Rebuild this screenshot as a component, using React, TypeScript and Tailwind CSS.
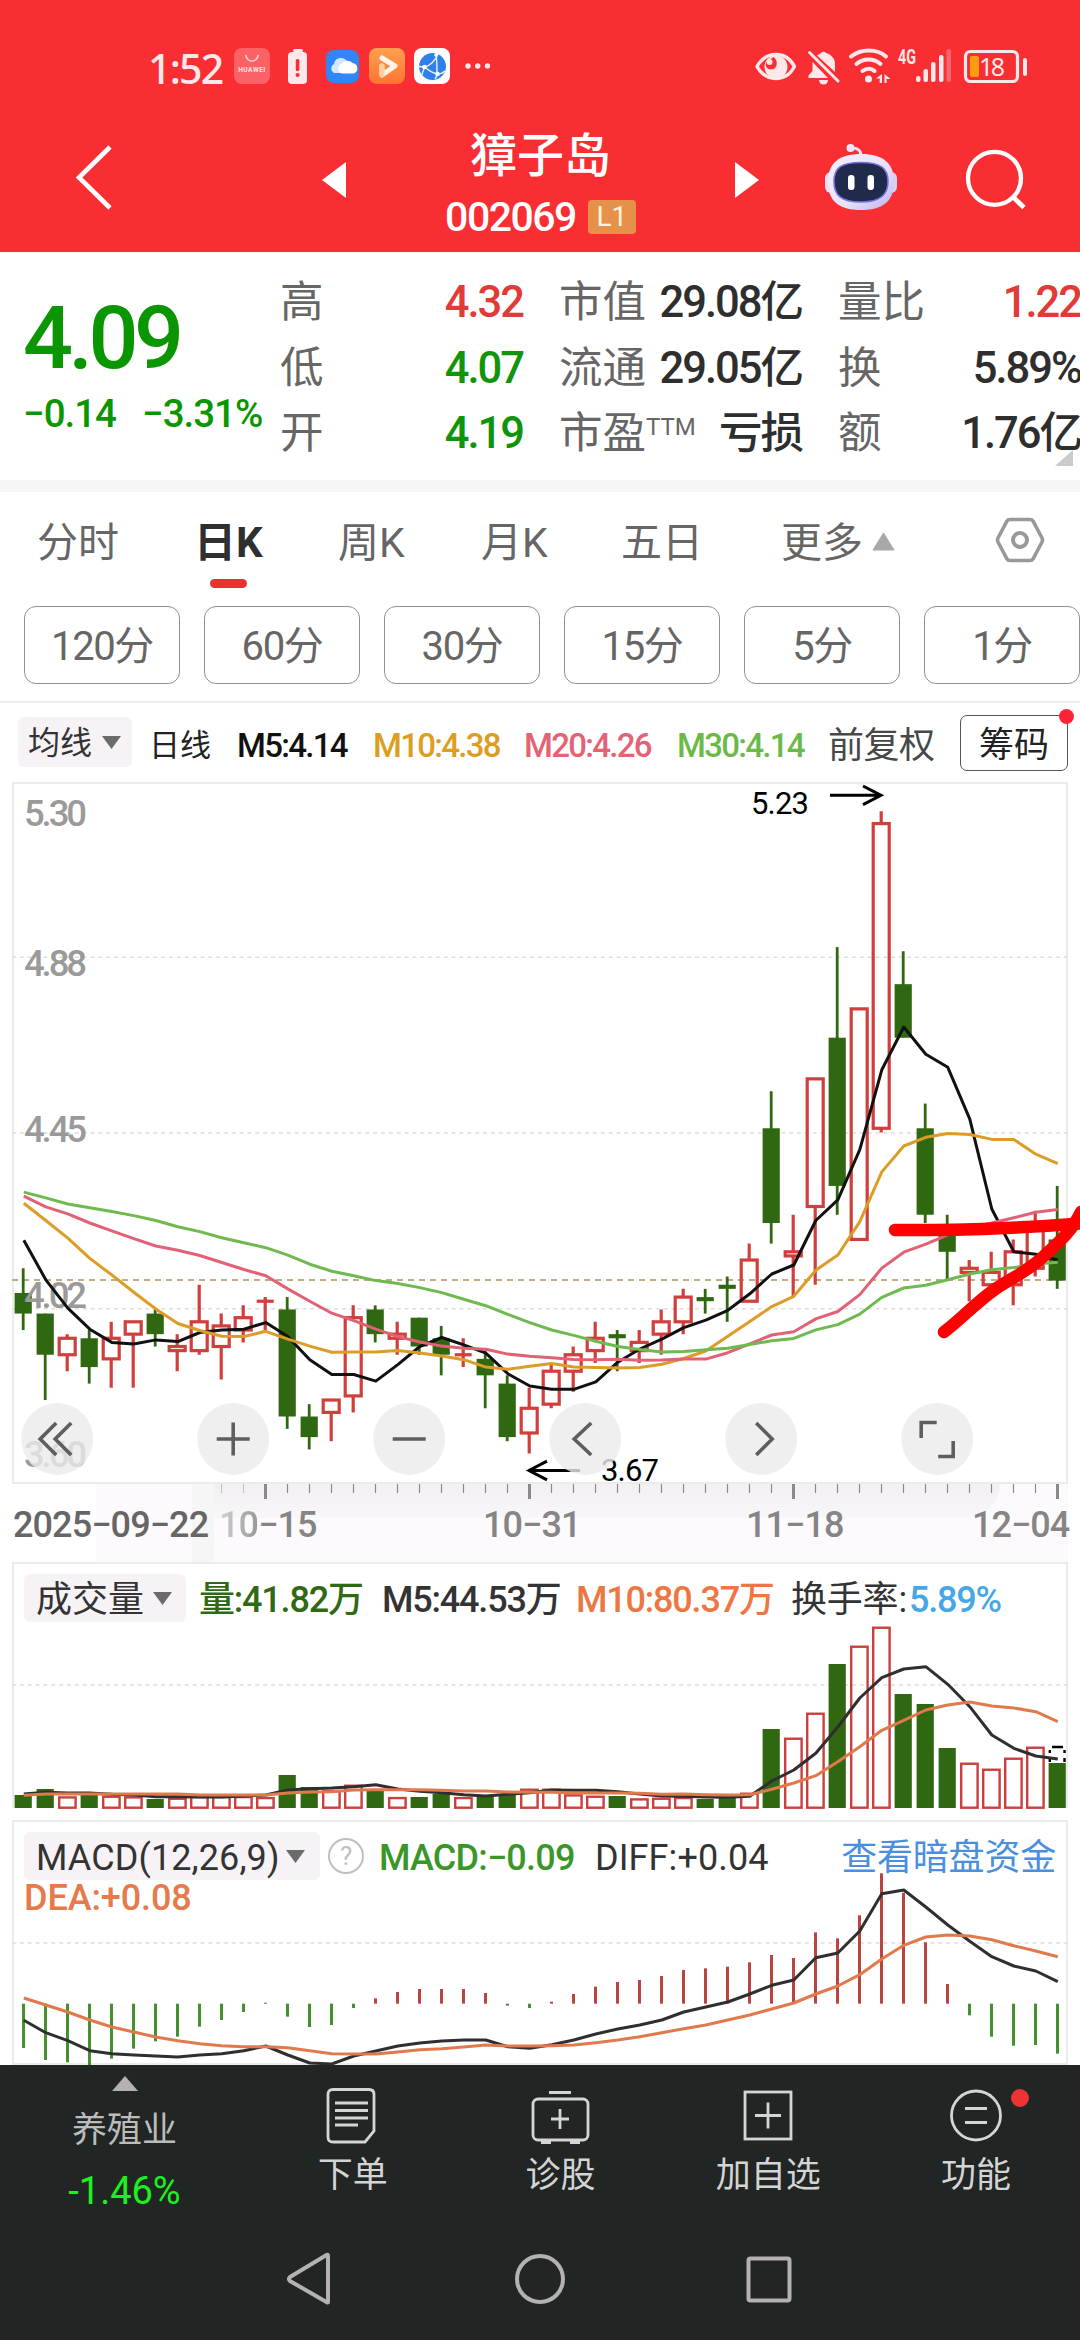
import React from 'react';

// [up, high, bodyTop, bodyBottom, low]
type Candle = [number, number, number, number, number];

const CANDLES: Candle[] = [
  [0, 4.12, 4.06, 4.01, 3.97], [0, 4.01, 4.01, 3.91, 3.8], [1, 3.96, 3.95, 3.91, 3.87], [0, 3.97, 3.95, 3.88, 3.84],
  [1, 3.99, 3.95, 3.9, 3.83], [1, 3.99, 3.99, 3.96, 3.83], [0, 4.02, 4.01, 3.96, 3.93], [1, 3.96, 3.93, 3.92, 3.87],
  [1, 4.08, 3.99, 3.92, 3.91], [1, 4.01, 3.98, 3.93, 3.85], [1, 4.03, 4.0, 3.97, 3.94], [1, 4.05, 4.04, 4.04, 3.97],
  [0, 4.05, 4.02, 3.76, 3.73], [0, 3.79, 3.76, 3.71, 3.68], [1, 3.8, 3.8, 3.77, 3.7], [1, 4.03, 4.0, 3.81, 3.77],
  [0, 4.03, 4.02, 3.96, 3.94], [1, 3.99, 3.96, 3.95, 3.91], [0, 4.0, 4.0, 3.93, 3.91], [0, 3.98, 3.95, 3.91, 3.86],
  [1, 3.95, 3.91, 3.91, 3.88], [0, 3.92, 3.9, 3.86, 3.78], [0, 3.86, 3.84, 3.71, 3.7], [1, 3.83, 3.78, 3.72, 3.67],
  [1, 3.89, 3.87, 3.79, 3.78], [1, 3.93, 3.91, 3.87, 3.82], [1, 3.99, 3.95, 3.92, 3.89], [0, 3.97, 3.96, 3.95, 3.87],
  [1, 3.97, 3.94, 3.92, 3.89], [1, 4.02, 3.99, 3.96, 3.91], [1, 4.07, 4.05, 3.99, 3.96], [0, 4.07, 4.05, 4.04, 4.01],
  [0, 4.1, 4.08, 4.07, 3.99], [1, 4.18, 4.14, 4.04, 4.04], [0, 4.55, 4.46, 4.23, 4.18], [1, 4.25, 4.16, 4.15, 4.05],
  [1, 4.58, 4.58, 4.27, 4.08], [0, 4.9, 4.68, 4.32, 4.25], [1, 4.75, 4.75, 4.19, 4.19], [1, 5.23, 5.2, 4.46, 4.45],
  [0, 4.89, 4.81, 4.68, 4.68], [0, 4.52, 4.46, 4.25, 4.23], [0, 4.25, 4.21, 4.16, 4.09], [1, 4.14, 4.12, 4.11, 4.04],
  [1, 4.16, 4.11, 4.08, 4.07], [1, 4.19, 4.16, 4.08, 4.03], [1, 4.26, 4.22, 4.12, 4.1], [0, 4.32, 4.19, 4.09, 4.07],
];

// averages of the days whose window starts before the first candle
const MA5_HEAD = [4.188, 4.092, 4.023, 3.972];
const MA10_HEAD = [4.278, 4.236, 4.193, 4.144, 4.104, 4.062, 4.021, 3.986, 3.969];
const MA20_HEAD = [
  4.295, 4.269, 4.252, 4.23, 4.211, 4.192, 4.174, 4.164, 4.151, 4.134, 4.117, 4.102, 4.07, 4.04, 4.011, 3.993, 3.972,
  3.954, 3.941,
];
const MA30_HEAD = [
  4.305, 4.291, 4.276, 4.267, 4.258, 4.248, 4.236, 4.221, 4.209, 4.194, 4.182, 4.17, 4.152, 4.13, 4.113, 4.102, 4.09,
  4.083, 4.073, 4.061, 4.045, 4.029, 4.008, 3.988, 3.97, 3.957, 3.943, 3.93, 3.923,
];

// indicator series, in thirds of a pixel below the top of the volume block
const VOLUME = [
  735, 717, 741, 735, 739, 741, 747, 745, 740, 740, 740, 743, 675, 711, 722, 706, 722, 743, 741, 732, 743, 738, 735, 718,
  718, 735, 739, 738, 747, 745, 743, 747, 741, 730, 537, 565, 490, 342, 289, 232, 432, 462, 594, 640, 658, 625, 592, 639,
];
const VOL_MA5 = [
  732, 727, 729, 729, 733, 735, 740, 740, 741, 741, 738, 735, 720, 716, 714, 710, 704, 717, 724, 728, 734, 738, 733, 728,
  720, 721, 721, 725, 732, 738, 739, 741, 742, 739, 693, 660, 610, 531, 444, 383, 357, 350, 403, 470, 555, 595, 618, 627,
];
const VOL_MA10 = [
  736, 732, 732, 732, 732, 732, 732, 732, 735, 735, 735, 735, 729, 726, 725, 720, 719, 719, 719, 721, 723, 723, 726, 727,
  727, 729, 729, 729, 730, 733, 732, 734, 735, 734, 718, 699, 677, 635, 590, 541, 511, 480, 465, 456, 468, 474, 485, 515,
];
const MACD = [
  1494, 1530, 1537, 1548, 1526, 1496, 1474, 1460, 1430, 1410, 1386, 1358, 1400, 1431, 1425, 1374, 1345, 1326, 1317, 1317,
  1317, 1329, 1367, 1374, 1355, 1332, 1310, 1296, 1290, 1278, 1260, 1255, 1250, 1237, 1215, 1224, 1147, 1165, 1096, 970,
  1028, 1177, 1302, 1396, 1460, 1487, 1485, 1511,
];
const DIFF = [
  1411, 1448, 1472, 1502, 1511, 1515, 1518, 1521, 1515, 1511, 1502, 1488, 1515, 1539, 1542, 1518, 1503, 1488, 1479, 1473,
  1470, 1470, 1490, 1495, 1484, 1470, 1452, 1437, 1425, 1410, 1386, 1371, 1356, 1332, 1306, 1290, 1223, 1209, 1143, 1031,
  1020, 1071, 1125, 1174, 1220, 1248, 1263, 1295,
];
const DEA = [
  1344, 1365, 1386, 1410, 1431, 1446, 1461, 1472, 1481, 1487, 1490, 1490, 1493, 1502, 1511, 1512, 1512, 1506, 1499, 1496,
  1491, 1485, 1488, 1488, 1487, 1485, 1478, 1470, 1460, 1448, 1436, 1425, 1410, 1395, 1377, 1359, 1332, 1308, 1274, 1227,
  1186, 1161, 1155, 1158, 1169, 1187, 1203, 1220,
];

const RED = '#d23e3c';
const GREEN = '#306812';

const px = (i: number) => 23.2 + i * 22;
const priceY = (p: number) => 782.4 + (5.3 - p) * 411.76;
const subY = (v: number) => 1550 + v / 3;

const closes = CANDLES.map(([up, , top, bottom]) => (up ? top : bottom));

const movingAverage = (n: number, head: number[]) =>
  closes.map((_, i) => (i < n - 1 ? head[i] : closes.slice(i - n + 1, i + 1).reduce((a, b) => a + b, 0) / n));

const toPoints = (values: number[], y: (v: number) => number) =>
  values.map((v, i) => `${px(i) + 0.6},${y(v).toFixed(1)}`).join(' ');

const Line: React.FC<{ values: number[]; y: (v: number) => number; color: string }> = ({ values, y, color }) => (
  <polyline points={toPoints(values, y)} fill="none" stroke={color} strokeWidth="3" strokeLinejoin="round" />
);

const GridLine: React.FC<{ y: number }> = ({ y }) => (
  <line x1="12" x2="1068" y1={y} y2={y} stroke="#dedede" strokeWidth="1.4" strokeDasharray="4 3.85" />
);

const Caret: React.FC<{ className?: string }> = ({ className = '' }) => (
  <svg className={`shrink-0 ${className}`} width="19" height="13" viewBox="0 0 19 13">
    <path d="M0 0h19L9.5 13z" fill="#6b6b6b" />
  </svg>
);

const StatusBar = () => (
  <div className="flex h-[132px] items-center pl-[148px] pr-[51px] text-[#ffe8ea]">
    <span className="w-[86px] pt-[4px] text-[41px] leading-none font-medium tracking-[-1.8px] font-['Noto_Sans',sans-serif]">1:52</span>
    <svg width="262" height="40" viewBox="234 46 262 40" className="shrink-0">
      <defs>
        <linearGradient id="play" x1="0" y1="0" x2="0" y2="1">
          <stop offset="0" stopColor="#ffa04e" />
          <stop offset="1" stopColor="#ff7430" />
        </linearGradient>
      </defs>
      <rect x="234" y="48" width="36" height="36" rx="8" fill="#fb6266" />
      <path d="M246 55a6 6 0 0 0 12 0" fill="none" stroke="#ffd0d2" strokeWidth="1.6" />
      <text x="252" y="71.5" fontSize="6.6" fontWeight="700" textAnchor="middle" fill="#ffe2e3" fontFamily="Roboto" letterSpacing=".5">HUAWEI</text>
      <rect x="293" y="49" width="10" height="3" rx="1.5" fill="#ffe8ea" />
      <rect x="288" y="52" width="19" height="32" rx="4" fill="#ffe8ea" />
      <rect x="295.8" y="59" width="3.6" height="12" rx="1.5" fill="#f92e33" />
      <circle cx="297.6" cy="75" r="2.1" fill="#f92e33" />
      <rect x="326" y="50" width="33" height="33" rx="8" fill="#2f86f6" />
      <path d="M334 73a5 5 0 0 1 0-9 7 7 0 0 1 6.500-6 8 8 0 0 1 7.500 5l-6 10z" fill="#d3e7ff" />
      <path d="M342 73.500a5 5 0 0 1-.5-9.500 7 7 0 0 1 11-1 5.500 5.500 0 0 1 1.500 10.500z" fill="#fff" />
      <rect x="369" y="48" width="36" height="36" rx="8" fill="url(#play)" />
      <path d="M382 58l13 8-13 9v-9" fill="none" stroke="#fff4ea" strokeWidth="5" strokeLinejoin="round" strokeLinecap="round" />
      <path d="M382 75v-9" stroke="#ffcf9f" strokeWidth="5" strokeLinecap="round" />
      <rect x="414" y="48" width="36" height="36" rx="8" fill="#fff" />
      <circle cx="432.5" cy="66.5" r="13.5" fill="#2f80ea" />
      <path d="M436 53c1 8 1 14 1 21m-12-7c6-2 10-6 13-13m-13 13c5 5 8 6 12 7m-12-7c-2 4-3 6-3 8m15-1c4 0 6-1 8-3m-8 3c0 2-1 4-2 5m-12-12c-3 0-5-1-6-2" fill="none" stroke="#e8f2ff" strokeWidth="1.4" />
      <circle cx="424.5" cy="67" r="2.3" fill="#fff" />
      <circle cx="437.500" cy="74" r="2.3" fill="#fff" />
      <circle cx="436" cy="55" r="1.8" fill="#fff" />
      <circle cx="468" cy="66" r="2.7" fill="#ffe8ea" />
      <circle cx="477.7" cy="66" r="2.7" fill="#ffe8ea" />
      <circle cx="487.5" cy="66" r="2.7" fill="#ffe8ea" />
    </svg>
    <svg width="276" height="40" viewBox="754 46 276 40" className="ml-auto shrink-0">
      <g fill="none" stroke="#ffe8ea" strokeWidth="3.4" strokeLinecap="round" strokeLinejoin="round">
        <path d="M758 66.500c9-16 29-16 37.500 0-8.500 16-28.500 16-37.500 0z" />
        <path d="M852 56.500c10-8 26-8 35 0" strokeWidth="4" />
        <path d="M857.500 64c7-6 17-6 24 0" strokeWidth="4" />
        <path d="M863.500 71c4-3 9-3 12 0" strokeWidth="4" />
        <path d="M810.500 52.500 839 81" strokeWidth="3" />
      </g>
      <circle cx="777" cy="67" r="11.5" fill="#ffe8ea" />
      <path d="M774.500 57c4 3 4.500 9 .5 12l-3 .500c-4 0-6-3-5-7z" fill="#f92e33" />
      <circle cx="770.500" cy="62" r="3" fill="#ffe8ea" />
      <path d="M813.500 62 829 78h-19.500v-2.500l4-4.500zM818 55.500l4-2.500a3 3 0 0 1 5 0c6 2 9 6 9 11v8z" fill="#ffe8ea" />
      <path d="M820 80h9a4.500 4.500 0 0 1-9 0z" fill="#ffe8ea" />
      <circle cx="869.5" cy="79" r="3.5" fill="#ffe8ea" />
      <path d="M883 74v9h-2.300v-4.500h-3.700zM885.500 74v9h2v-4h4z" fill="#ffe8ea" />
      <text x="899" y="64" fontSize="20" fontWeight="700" textLength="18" lengthAdjust="spacingAndGlyphs" fill="#ffe8ea" fontFamily="Roboto">4G</text>
      <g fill="#ffe8ea">
        <rect x="917" y="76" width="4.5" height="6" rx="2" />
        <rect x="924.5" y="69" width="4.5" height="13" rx="2" />
        <rect x="932" y="62" width="4.5" height="20" rx="2" />
        <rect x="940" y="55" width="4.5" height="27" rx="2" />
        <rect x="947.5" y="49" width="4.5" height="33" rx="2" opacity=".3" />
        <rect x="1024" y="58" width="4" height="18" rx="2" />
      </g>
      <rect x="966.5" y="51.5" width="52" height="30" rx="5" fill="none" stroke="#ffe8ea" strokeWidth="3.2" />
      <rect x="971" y="56" width="9" height="21" rx="2" fill="#ff9d12" />
      <text x="980" y="76" fontSize="25" fill="#ffe8ea" fontFamily="Noto Sans" textLength="26">18</text>
    </svg>
  </div>
);

const TitleBar = () => (
  <div className="flex h-[120px] text-white">
    <svg width="322" height="120" viewBox="0 132 322 120" className="shrink-0">
      <path d="M110 147 79 177.500l31 30.500" fill="none" stroke="#fff" strokeWidth="4.6" />
    </svg>
    <svg width="24" height="36" viewBox="0 0 24 36" className="mt-[30px] shrink-0">
      <path d="M24 0v36L0 18z" fill="#fff" />
    </svg>
    <div className="flex w-[389px] shrink-0 flex-col items-center">
      <h1 className="text-[47px] leading-[48px] font-medium">獐子岛</h1>
      <div className="mt-[17px] flex items-center gap-[12px]">
        <span className="text-[41px] leading-[40px] font-medium tracking-[-1.5px]">002069</span>
        <span className="flex h-[34px] w-[48px] items-center justify-center rounded-[4px] bg-[#e6914a] text-[28px] text-[#fff2dd]">L1</span>
      </div>
    </div>
    <svg width="24" height="36" viewBox="0 0 24 36" className="mt-[30px] shrink-0">
      <path d="M0 0v36l24-18z" fill="#fff" />
    </svg>
    <svg width="321" height="120" viewBox="759 132 321 120" className="shrink-0">
      <defs>
        <linearGradient id="head" x1="0" y1="0" x2="1" y2="1">
          <stop offset="0" stopColor="#f6f2ff" />
          <stop offset=".6" stopColor="#e6e0fa" />
          <stop offset="1" stopColor="#b9b2ee" />
        </linearGradient>
      </defs>
      <rect x="825" y="172" width="12" height="21" rx="6" fill="#e4def8" />
      <rect x="885" y="172" width="12" height="21" rx="6" fill="#d8d0f5" />
      <path d="M851 148c7 0 10 2 10 8" fill="none" stroke="#e9defa" strokeWidth="3" />
      <circle cx="850.5" cy="148" r="4" fill="#eee6fc" />
      <path d="M861 154c22 0 33 9 33 28 0 20-12 28-33 28s-33-8-33-28c0-19 11-28 33-28z" fill="url(#head)" />
      <path d="M861 162.500c20 0 27 6 27 19s-7 20.500-27 20.500-27-7-27-20.500 7-19 27-19z" fill="#1f2a4c" stroke="#7a6fe0" strokeWidth="1.6" />
      <rect x="848" y="175" width="6.5" height="15" rx="3" fill="#fff" />
      <rect x="867.5" y="175" width="6.5" height="15" rx="3" fill="#fff" />
      <circle cx="994.5" cy="178.3" r="26.5" fill="none" stroke="#fff" strokeWidth="4.3" />
      <path d="M1013 197l11 10.500" stroke="#fff" strokeWidth="4.8" />
    </svg>
  </div>
);

const Quote: React.FC<{ label: React.ReactNode; value: React.ReactNode; color?: string }> = ({
  label,
  value,
  color = 'text-[#2e2e2e]',
}) => (
  <div className="flex h-[65.500px] items-center justify-between whitespace-nowrap">
    <span className="text-[43.500px] text-[#666]">{label}</span>
    <span className={`-mr-[1px] text-[43.500px] font-medium tracking-[-2px] ${color}`}>{value}</span>
  </div>
);

const QuotePanel = () => (
  <div className="relative flex h-[228px] bg-white">
    <div className="w-[280px] shrink-0 pl-[23px] pt-[41px] text-[#0a9600]">
      <div className="text-[88px] leading-[90px] font-medium tracking-[-4.5px]">4.09</div>
      <div className="mt-[9px] flex gap-[26px] text-[38.5px] leading-[44px] font-medium tracking-[-1px] whitespace-nowrap">
        <span>−0.14</span>
        <span>−3.31%</span>
      </div>
    </div>
    <div className="w-[242px] shrink-0 pt-[18px]">
      <Quote label="高" value="4.32" color="text-[#e23a37]" />
      <Quote label="低" value="4.07" color="text-[#0f940c]" />
      <Quote label="开" value="4.19" color="text-[#0f940c]" />
    </div>
    <div className="ml-[37px] w-[242px] shrink-0 pt-[18px]">
      <Quote label="市值" value="29.08亿" />
      <Quote label="流通" value="29.05亿" />
      <Quote label={<>市盈<sup className="-top-[13px] text-[24px]">TTM</sup></>} value="亏损" />
    </div>
    <div className="ml-[37px] w-[242px] shrink-0 pt-[18px]">
      <Quote label="量比" value="1.22" color="text-[#e23a37]" />
      <Quote label="换" value="5.89%" />
      <Quote label="额" value="1.76亿" />
    </div>
    <svg className="absolute right-[7px] bottom-[14px]" width="18" height="16" viewBox="0 0 18 16">
      <path d="M18 0v16H0z" fill="#cbcbcb" />
    </svg>
  </div>
);

const PERIODS = ['120分', '60分', '30分', '15分', '5分', '1分'];

const PeriodTabs = () => (
  <>
    <div className="flex h-[114px] items-start pt-[21px] pl-[37px] text-[41px] leading-[60px] text-[#666] whitespace-nowrap">
      <span className="w-[157px]">分时</span>
      <div className="w-[144px] text-[42px] font-bold text-[#2f2f2f]">
        日K
        <div className="mt-[6px] ml-[16px] h-[9px] w-[37px] rounded-full bg-[#e93131]" />
      </div>
      <span className="w-[143px]">周K</span>
      <span className="w-[140px]">月K</span>
      <span className="w-[160px]">五日</span>
      <div className="flex w-[214px] items-center">
        更多
        <svg className="-mt-[4px] ml-[9px]" width="23" height="19" viewBox="0 0 23 19">
          <path d="M11.500 1 22 18H1z" fill="#a9a7a9" stroke="#a9a7a9" strokeLinejoin="round" />
        </svg>
      </div>
      <svg className="mt-[4px]" width="50" height="46" viewBox="0 0 50 46" fill="none" stroke="#999" strokeWidth="4">
        <path d="M15 2.500h20q2 0 3 1.500l9 17q1 2 0 4l-9 17q-1 1.500-3 1.500H15q-2 0-3-1.500L3 25q-1-2 0-4l9-17q1-1.500 3-1.500z" strokeWidth="3.6" />
        <circle cx="25" cy="23" r="7" />
      </svg>
    </div>
    <div className="flex h-[97px] gap-[24px] border-b-2 border-[#ececec] pl-[24px]">
      {PERIODS.map((p) => (
        <div
          key={p}
          className="flex h-[78px] w-[156px] shrink-0 items-center justify-center rounded-[12px] border border-[#8f8f8f] pt-[4px] text-[40px] tracking-[-1.4px] text-[#666]"
        >
          {p}
        </div>
      ))}
    </div>
  </>
);

const LegendBar = () => (
  <div className="flex h-[79px] items-start pt-[14px] pl-[18px] text-[33px] leading-[50px] font-medium tracking-[-1.7px] whitespace-nowrap">
    <div className="flex h-[50px] w-[114px] items-center rounded-[6px] bg-[#f6f2f6] pt-[2px] pl-[10px] font-normal text-[#333] tracking-normal">
      <span className="text-[32px]">均线</span>
      <Caret className="-mt-[2px] ml-[10px]" />
    </div>
    <span className="ml-[17px] w-[88px] pt-[4px] text-[31px] font-normal text-[#222] tracking-normal">日线</span>
    <span className="w-[136px] pt-[4px] text-[#111]">M5:4.14</span>
    <span className="w-[151px] pt-[4px] text-[#dd9d20]">M10:4.38</span>
    <span className="w-[153px] pt-[4px] text-[#e36374]">M20:4.26</span>
    <span className="w-[151px] pt-[4px] text-[#6bba49]">M30:4.14</span>
    <span className="w-[132px] pt-[4px] text-[36px] font-normal text-[#484848] tracking-[-.5px]">前复权</span>
    <div className="relative -mt-[2px] flex h-[56px] w-[108px] items-center justify-center rounded-[7px] border border-[#555] pt-[5px] text-[35px] font-normal text-[#222] tracking-normal">
      筹码
      <span className="absolute -top-[7px] -right-[7px] size-[15px] rounded-full bg-[#ff2335]" />
    </div>
  </div>
);

const TOOLS = [
  'M-1-16-17 0-1 16M14-16-2 0 14 16',
  'M-16.500 0h33M0-16.500v33',
  'M-16.500 0h33',
  'M6-16-11 0 6 16',
  'M-5-16 11 0-5 16',
  'M-16-1v-15.500h15.500M16 2v15.500H1',
];

const PriceChart = () => (
  <svg width="1080" height="702" viewBox="0 782 1080 702" className="block">
    <rect x="13" y="783" width="1054" height="700" fill="none" stroke="#ebebeb" strokeWidth="2" />
    <GridLine y={957.3} />
    <GridLine y={1133} />
    <GridLine y={1308.7} />
    <line x1="12" x2="1068" y1="1280" y2="1280" stroke="#bcae80" strokeWidth="1.8" strokeDasharray="6 5" />
    {CANDLES.map(([up, high, top, bottom, low], i) => {
      const x = px(i);
      const t = priceY(top);
      const b = priceY(bottom);
      return up ? (
        <g key={i} stroke={RED} strokeWidth="3.2" fill="none">
          <path d={`M${x} ${priceY(high)}V${t}M${x} ${b}V${priceY(low)}`} />
          {b - t < 1 ? <path d={`M${x - 8.5} ${t}h17`} /> : <rect x={x - 8} y={t} width="16" height={b - t} />}
        </g>
      ) : (
        <g key={i} fill={GREEN}>
          <rect x={x - 1.4} y={priceY(high)} width="2.8" height={priceY(low) - priceY(high)} />
          <rect x={x - 8.6} y={t} width="17.2" height={b - t} />
        </g>
      );
    })}
    <g fill="#9a9a9a" fontSize="36.5" fontWeight="500" fontFamily="Roboto">
      <text x="24" y="826" textLength="63">5.30</text>
      <text x="24" y="975.5" textLength="63">4.88</text>
      <text x="24" y="1141.5" textLength="63">4.45</text>
      <text x="24" y="1308" textLength="63">4.02</text>
      <text x="24" y="1466.5" textLength="63">3.60</text>
    </g>
    <Line values={movingAverage(5, MA5_HEAD)} y={priceY} color="#111" />
    <Line values={movingAverage(10, MA10_HEAD)} y={priceY} color="#dc9c26" />
    <Line values={movingAverage(20, MA20_HEAD)} y={priceY} color="#e26175" />
    <Line values={movingAverage(30, MA30_HEAD)} y={priceY} color="#6fb94f" />
    <g fontSize="31" fontFamily="Roboto" fill="#000">
      <text x="751" y="814" textLength="58">5.23</text>
      <text x="601" y="1480.5" textLength="58">3.67</text>
    </g>
    <path d="M830 795.300h51M863 786l18 9.300-18 9.300M580 1470.500h-51m18-9.300-18 9.300 18 9.300" fill="none" stroke="#000" strokeWidth="3" />
    {TOOLS.map((d, i) => (
      <g key={i} transform={`translate(${57.2 + i * 176} 1439)`}>
        <circle r="36" fill="#ebebeb" fillOpacity=".8" />
        <path d={d} fill="none" stroke="#5e5e5e" strokeWidth="3.6" />
      </g>
    ))}
    {/* hand-drawn trend marks */}
    <g fill="none" stroke="#ff0000" strokeLinecap="round" strokeWidth="12.5">
      <path d="M895 1230c60 0 110-.5 191-7" />
      <path d="M944 1332c16-12 34-31 50-42s34-19 50-34c14-13 28-25 37-44" />
    </g>
  </svg>
);

const DateAxis = () => (
  <div className="relative flex h-[78px] items-start bg-white pt-[21px] pl-[13px] text-[36px] leading-[40px] font-medium text-[#858585] whitespace-nowrap">
    <div className="absolute top-0 right-[12px] bottom-0 left-[96px] bg-[#fdfafd]" />
    <div className="absolute top-0 right-[80px] left-[192px] h-[34px] rounded-br-[120px] bg-linear-to-b from-[#f3f0f3] to-[#f8f6f8]" />
    <div className="absolute top-0 left-[192px] h-[78px] w-[22px] bg-[#f7f6f7]" />
    <svg className="absolute top-0 left-0" width="1080" height="16" viewBox="0 1484 1080 16">
      {CANDLES.map((_, i) =>
        i < 9 ? null : (
          <line
            key={i}
            x1={px(i) + 0.3}
            x2={px(i) + 0.3}
            y1="1484"
            y2={i % 12 === 11 ? 1499 : 1493}
            stroke={i < 11 ? '#c4c4c4' : '#8a8a8a'}
            strokeWidth={i % 12 === 11 ? 3 : 1.2}
          />
        ),
      )}
    </svg>
    <span className="relative w-[206px] tracking-[-.9px] text-[#666]">2025−09−22</span>
    <span className="relative w-[264px] tracking-[-.9px]">
      <span className="bg-linear-to-r from-[#d2d2d2] to-[#999] bg-clip-text text-transparent">10</span>−15
    </span>
    <span className="relative w-[263px] tracking-[-.9px]">10−31</span>
    <span className="relative w-[226px] tracking-[-.9px]">11−18</span>
    <span className="relative tracking-[-1px]">12−04</span>
  </div>
);

const VolumePanel = () => (
  <div className="relative h-[258px]">
    <svg width="1080" height="258" viewBox="0 1562 1080 258" className="block">
      <path d="M13 1808V1563h1054v245" fill="none" stroke="#ebebeb" strokeWidth="2" />
      <GridLine y={1685} />
      {VOLUME.map((v, i) =>
        CANDLES[i][0] ? (
          <rect key={i} x={px(i) - 8} y={subY(v) + 0.4} width="16.4" height={1807.3 - subY(v)} fill="none" stroke="#c9403e" strokeWidth="2.4" />
        ) : (
          <rect key={i} x={px(i) - 8.6} y={subY(v)} width="17.2" height={1808 - subY(v)} fill={GREEN} />
        ),
      )}
      {/* projected volume for the rest of the session */}
      <path d="M1052 1747h11M1049.800 1750v3M1049.800 1758v4M1064.500 1750v3M1064.500 1758v4" stroke="#000" strokeWidth="2.4" />
      <Line values={VOL_MA5} y={subY} color="#2f2f2f" />
      <Line values={VOL_MA10} y={subY} color="#e07a4c" />
    </svg>
    <div className="absolute top-[12px] left-[24px] flex h-[48px] items-center pt-[3px] text-[36px] font-medium tracking-[-1.2px] whitespace-nowrap">
      <div className="-mt-[3px] flex h-[48px] w-[162px] items-center rounded-[6px] bg-[#f6f2f6] pl-[12px] font-normal text-[#333] tracking-normal">
        <span className="pt-[3px]">成交量</span>
        <Caret className="ml-[9px]" />
      </div>
      <span className="ml-[13px] w-[183px] text-[#306914]">量:41.82万</span>
      <span className="w-[194px] text-[#333]">M5:44.53万</span>
      <span className="w-[215px] text-[#ec7742]">M10:80.37万</span>
      <span className="w-[118px] font-normal text-[#333] tracking-[-.2px]">换手率:</span>
      <span className="text-[#45a7e6]">5.89%</span>
    </div>
  </div>
);

const MacdPanel = () => (
  <div className="relative h-[245px] overflow-hidden">
    <div className="absolute top-[12px] left-[24px] flex h-[48px] w-[1032px] items-center text-[36px] font-medium tracking-[-.5px] text-[#333] whitespace-nowrap">
      <div className="flex h-[48px] w-[296px] items-center rounded-[6px] bg-[#f6f2f6] pl-[12px]">
        <span className="w-[250px] pt-[3px] font-normal tracking-[.1px]">MACD(12,26,9)</span>
        <Caret />
      </div>
      <span className="ml-[8px] flex size-[36px] items-center justify-center rounded-full border-[2.5px] border-[#bfbfbf] text-[26px] font-normal text-[#bfbfbf]">?</span>
      <span className="ml-[15px] w-[216px] pt-[3px] tracking-[-.8px] text-[#3b9629]">MACD:−0.09</span>
      <span className="pt-[3px] font-normal tracking-[.1px]">DIFF:+0.04</span>
      <a className="ml-auto pt-[4px] font-normal text-[#4a8fdf] tracking-[-.2px]">查看暗盘资金</a>
    </div>
    <div className="absolute top-[58px] left-[24px] text-[36px] leading-[40px] font-medium tracking-[-.1px] text-[#e57a4a]">DEA:+0.08</div>
    <svg width="1080" height="245" viewBox="0 1820 1080 245" className="relative block">
      <rect x="13" y="1821" width="1054" height="243" fill="none" stroke="#ebebeb" strokeWidth="2" />
      <GridLine y={1943} />
      {MACD.map((v, i) => (
        <line
          key={i}
          x1={px(i) + 0.3}
          x2={px(i) + 0.3}
          y1={subY(1361)}
          y2={subY(v)}
          stroke={v < 1361 ? '#bb4340' : '#45902f'}
          strokeWidth="3"
        />
      ))}
      <Line values={DIFF} y={subY} color="#2f2f2f" />
      <Line values={DEA} y={subY} color="#e07a4c" />
    </svg>
  </div>
);

const MENU = [
  {
    label: '下单',
    icon: (
      <g>
        <path d="M7 1.500h36q5 0 5 5V43L39 54H7q-5 0-5-5V6.500q0-5 5-5z" />
        <path d="M9 15h33M9 22.500h33M9 30h33M9 37h23" />
      </g>
    ),
  },
  {
    label: '诊股',
    icon: (
      <g>
        <rect x="-1" y="11" width="55" height="41" rx="5" />
        <path d="M15 4.500h22M7 54.500h10M36 54.500h10M17 31h18M26 21v20" />
      </g>
    ),
  },
  {
    label: '加自选',
    icon: (
      <g>
        <rect x="4" y="4" width="46" height="47" />
        <path d="M14 27.500h26M27 14.500v26" />
      </g>
    ),
  },
  {
    label: '功能',
    icon: (
      <g>
        <circle cx="27" cy="27.5" r="24.500" />
        <path d="M16 20.500h22M16 34.500h22" />
      </g>
    ),
  },
];

const BottomBar = () => (
  <div className="h-[275px] bg-[#212523]">
    <div className="flex h-[160px] text-[35px] leading-[40px] text-[#d4d4d4]">
      <div className="flex w-[249px] shrink-0 flex-col items-center pt-[11px] text-[#bcbcbc]">
        <svg width="26" height="15" viewBox="0 0 26 15">
          <path d="M13 0 26 15H0z" fill="#b3b1b3" />
        </svg>
        <span className="mt-[20px]">养殖业</span>
        <span className="mt-[20px] text-[38px] text-[#1ff01f]">-1.46%</span>
      </div>
      {MENU.map(({ label, icon }) => (
        <div key={label} className="relative flex w-[207.7px] shrink-0 flex-col items-center pt-[23px]">
          <svg width="60" height="60" viewBox="-3 0 60 60" fill="none" stroke="#d6d4d6" strokeWidth="2.8">
            {icon}
          </svg>
          <span className="mt-[8px]">{label}</span>
          {label === '功能' && <span className="absolute top-[24px] right-[51px] size-[18px] rounded-full bg-[#ef3232]" />}
        </div>
      ))}
    </div>
    <svg width="1080" height="115" viewBox="0 2225 1080 115" fill="none" stroke="#b3b1b3" strokeWidth="4" strokeLinejoin="round">
      <path d="M328 2256v46q0 1-1.500 0L290 2281q-2-2 0-4l36.500-22q1.500-1 1.500 1z" />
      <circle cx="540" cy="2279" r="23" />
      <rect x="748.5" y="2258.5" width="41" height="42" rx="2" />
    </svg>
  </div>
);

const App: React.FC = () => (
  <div className="h-[2340px] w-[1080px] overflow-hidden bg-white font-['Roboto','Noto_Sans_CJK_SC',sans-serif]">
    <header className="h-[252px] bg-[#f92e33]">
      <StatusBar />
      <TitleBar />
    </header>
    <QuotePanel />
    <div className="h-[12px] bg-[#f6f6f6]" />
    <PeriodTabs />
    <LegendBar />
    <PriceChart />
    <DateAxis />
    <VolumePanel />
    <MacdPanel />
    <BottomBar />
  </div>
);

export default App;
